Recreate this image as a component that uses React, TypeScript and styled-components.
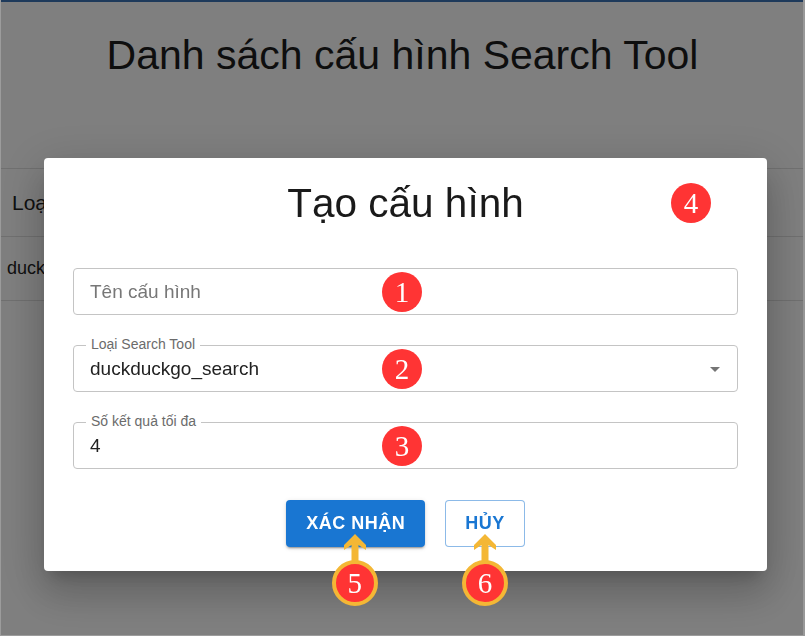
import React from "react";
import styled, { createGlobalStyle } from "styled-components";

const GlobalStyle = createGlobalStyle`
  html, body { margin: 0; padding: 0; background: #ffffff; }
  body { font-family: "Liberation Sans", Arial, sans-serif; width: 805px; height: 636px; overflow: hidden; }
  * { box-sizing: border-box; }
`;

const Page = styled.div`
  width: 805px;
  height: 636px;
  display: flex;
  flex-direction: column;
  background: #fff;
`;

const TopBar = styled.div`
  height: 2px;
  background: #3c75b6;
`;

const PageTitle = styled.h1`
  margin: 29px 0 0;
  height: 48px;
  line-height: 48px;
  font-size: 41px;
  font-weight: 400;
  text-align: center;
  color: #1c1c1c;
`;

const Table = styled.div`
  margin-top: 89px;
  display: flex;
  flex-direction: column;
`;

const Row = styled.div<{ $h: number }>`
  height: ${(p) => p.$h}px;
  border-top: 1px solid #e0e0e0;
  display: flex;
  align-items: center;
`;

const Cell = styled.div<{ $head?: boolean }>`
  width: 44px;
  padding-left: ${(p) => (p.$head ? 12 : 7)}px;
  font-size: ${(p) => (p.$head ? 21 : 18)}px;
  color: #222;
  white-space: nowrap;
  overflow: hidden;
`;

const EndLine = styled.div`
  border-top: 1px solid #e0e0e0;
`;

const Backdrop = styled.div`
  position: fixed;
  inset: 0;
  background: rgba(0, 0, 0, 0.5);
  box-shadow: inset 1px 0 0 #9c9c9c, inset -2px 0 0 #999, inset 0 -1px 0 #9c9c9c;
  display: flex;
  align-items: flex-start;
  padding: 158px 0 0 44px;
`;

const Dialog = styled.div`
  width: 723px;
  height: 413px;
  background: #fff;
  border-radius: 4px;
  box-shadow: 0px 11px 15px -7px rgba(0, 0, 0, 0.2),
    0px 24px 38px 3px rgba(0, 0, 0, 0.14), 0px 9px 46px 8px rgba(0, 0, 0, 0.12);
  padding: 20px 29px 24px;
  display: flex;
  flex-direction: column;
`;

const DialogHeader = styled.div`
  position: relative;
  height: 50px;
  display: flex;
  align-items: center;
  justify-content: center;
`;

const DialogTitle = styled.h2`
  margin: 0;
  font-size: 40.5px;
  font-weight: 400;
  line-height: 50px;
  color: #1a1a1a;
`;

const Badge = styled.span<{ $left?: number; $right?: number }>`
  position: absolute;
  top: 50%;
  ${(p) => (p.$left !== undefined ? `left: ${p.$left}px;` : "")}
  ${(p) => (p.$right !== undefined ? `right: ${p.$right}px;` : "")}
  transform: translateY(-50%);
  width: 40px;
  height: 40px;
  border-radius: 50%;
  background: #ff3434;
  color: #fff;
  font-family: "Liberation Serif", "Times New Roman", serif;
  font-size: 29px;
  line-height: 40px;
  text-align: center;
  pointer-events: none;
`;

const Form = styled.div`
  margin-top: 40px;
  display: flex;
  flex-direction: column;
  gap: 30px;
`;

const Field = styled.div`
  position: relative;
  height: 47px;
  border: 1px solid #c4c4c4;
  border-radius: 4px;
  display: flex;
  align-items: center;
  padding: 0 10px 0 16px;
`;

const FieldLabel = styled.label`
  position: absolute;
  top: -10px;
  left: 12px;
  padding: 0 5px;
  background: #fff;
  font-size: 14px;
  line-height: 16px;
  color: #6b6b6b;
`;

const Input = styled.input`
  flex: 1;
  border: 0;
  outline: 0;
  padding: 0;
  background: transparent;
  font-family: "Liberation Sans", Arial, sans-serif;
  font-size: 19px;
  color: #222;
  &::placeholder {
    color: #777;
    opacity: 1;
  }
`;

const SelectValue = styled.div`
  flex: 1;
  font-size: 19px;
  color: #222;
`;

const Caret = styled.svg`
  width: 24px;
  height: 24px;
  fill: rgba(0, 0, 0, 0.54);
`;

const Actions = styled.div`
  margin-top: 31px;
  display: flex;
  justify-content: center;
  gap: 20px;
`;

const ButtonWrap = styled.div`
  position: relative;
`;

const Button = styled.button<{ $variant: "contained" | "outlined" }>`
  height: 47px;
  padding: 0 ${(p) => (p.$variant === "contained" ? 20 : 19)}px;
  border-radius: 4px;
  font-family: "Liberation Sans", Arial, sans-serif;
  font-weight: 700;
  font-size: 18px;
  letter-spacing: 0.5px;
  cursor: pointer;
  ${(p) =>
    p.$variant === "contained"
      ? `background: #1976d2; color: #fff; border: 0;
         box-shadow: 0px 3px 1px -2px rgba(0,0,0,0.2), 0px 2px 2px 0px rgba(0,0,0,0.14), 0px 1px 5px 0px rgba(0,0,0,0.12);`
      : `background: #fff; color: #1976d2; border: 1px solid rgba(25,118,210,0.5);`}
`;

const Pointer = styled.div<{ $dx: number }>`
  position: absolute;
  top: 34px;
  left: 50%;
  transform: translateX(calc(-50% + ${(p) => p.$dx}px));
  display: flex;
  flex-direction: column;
  align-items: center;
  pointer-events: none;
`;

const PointerArrow = styled.svg`
  width: 22px;
  height: 28px;
  fill: #f4b735;
  display: block;
`;

const Ring = styled.div`
  margin-top: -2px;
  width: 46px;
  height: 46px;
  border-radius: 50%;
  border: 4px solid #f4b735;
  background: #ff3434;
  color: #fff;
  font-family: "Liberation Serif", "Times New Roman", serif;
  font-size: 29px;
  line-height: 38px;
  text-align: center;
`;

const Marker: React.FC<{ n: number; dx: number }> = ({ n, dx }) => (
  <Pointer $dx={dx}>
    <PointerArrow viewBox="0 0 22 28">
      <path d="M11 0 L22 11 L22 16 L14.5 11 L14.5 28 L7.5 28 L7.5 11 L0 16 L0 11 Z" />
    </PointerArrow>
    <Ring>{n}</Ring>
  </Pointer>
);

export default function App() {
  return (
    <>
      <GlobalStyle />
      <Page>
        <TopBar />
        <PageTitle>Danh sách cấu hình Search Tool</PageTitle>
        <Table>
          <Row $h={68}>
            <Cell $head>Loại</Cell>
          </Row>
          <Row $h={64}>
            <Cell>duckduckgo_search</Cell>
          </Row>
          <EndLine />
        </Table>
      </Page>
      <Backdrop>
        <Dialog>
          <DialogHeader>
            <DialogTitle>Tạo cấu hình</DialogTitle>
            <Badge $right={27}>4</Badge>
          </DialogHeader>
          <Form>
            <Field>
              <Input placeholder="Tên cấu hình" />
              <Badge $left={308}>1</Badge>
            </Field>
            <Field>
              <FieldLabel>Loại Search Tool</FieldLabel>
              <SelectValue>duckduckgo_search</SelectValue>
              <Caret viewBox="0 0 24 24">
                <path d="M7 10l5 5 5-5z" />
              </Caret>
              <Badge $left={308}>2</Badge>
            </Field>
            <Field>
              <FieldLabel>Số kết quả tối đa</FieldLabel>
              <Input value="4" readOnly />
              <Badge $left={308}>3</Badge>
            </Field>
          </Form>
          <Actions>
            <ButtonWrap>
              <Button $variant="contained">XÁC NHẬN</Button>
              <Marker n={5} dx={-1} />
            </ButtonWrap>
            <ButtonWrap>
              <Button $variant="outlined">HỦY</Button>
              <Marker n={6} dx={0} />
            </ButtonWrap>
          </Actions>
        </Dialog>
      </Backdrop>
    </>
  );
}
